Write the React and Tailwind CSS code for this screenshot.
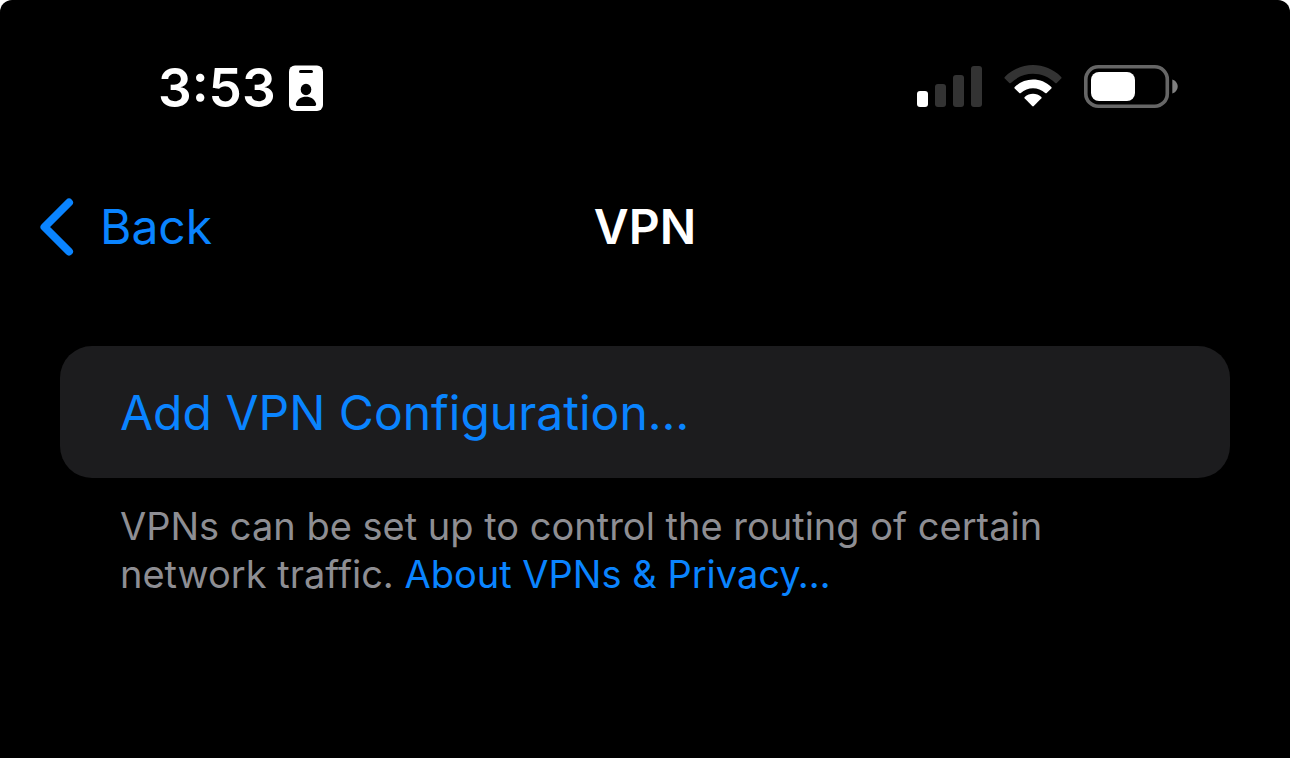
function BadgeIcon() {
  return (
    <svg width="34" height="46" viewBox="0 0 34 46" aria-hidden="true">
      <rect y="0.500" width="34" height="45.500" rx="6" fill="#fff" />
      <rect x="10" y="5" width="14" height="3" rx="1.500" fill="#000" />
      <ellipse cx="17" cy="24.500" rx="5.300" ry="5.800" fill="#000" />
      <path d="M9 41C7 41 6.600 39.800 7 38.400C8.300 34.400 12 31.800 17 31.800S25.700 34.400 27 38.400C27.400 39.800 27 41 25 41Z" fill="#000" />
    </svg>
  );
}

function SignalIcon() {
  return (
    <svg width="65" height="42" viewBox="0 0 65 42" role="img" aria-label="Signal: one bar">
      <rect x="0" y="26" width="11" height="16" rx="3" fill="#fff" />
      <rect x="18" y="19" width="11" height="23" rx="3" fill="#333" />
      <rect x="36" y="10" width="11" height="32" rx="3" fill="#333" />
      <rect x="54" y="1" width="11" height="41" rx="3" fill="#333" />
    </svg>
  );
}

function WifiIcon() {
  return (
    <svg width="58" height="42" viewBox="0 0 58 42" role="img" aria-label="Wi-Fi">
      <path d="M.8 13.500Q0 12.700 .8 11.900C16.400-3.900 41.600-3.900 57.200 11.900Q58 12.700 57.200 13.500L52.700 18Q52 18.700 51.200 18C38.700 5.700 19.300 5.700 6.800 18Q6 18.700 5.300 18Z" fill="#333" />
      <path d="M10.700 23.500Q10 22.700 10.700 21.900C20.800 12 37.200 12 47.300 21.900Q48 22.700 47.300 23.500L42.700 28Q42 28.700 41.200 28C34.300 21.500 23.700 21.500 16.800 28Q16 28.700 15.300 28Z" fill="#fff" />
      <path d="M20.600 33.300Q20 32.500 20.700 31.900C25.500 27.800 32.500 27.800 37.300 31.900Q38 32.500 37.400 33.300L29.800 41Q29 41.800 28.200 41Z" fill="#fff" />
    </svg>
  );
}

function BatteryIcon() {
  return (
    <svg width="94" height="44" viewBox="0 0 94 44" role="img" aria-label="Battery half full">
      <rect x="1.800" y="2.800" width="81.500" height="39.400" rx="12.500" fill="none" stroke="#666" strokeWidth="3.600" />
      <rect x="7" y="8" width="44" height="29" rx="8" fill="#fff" />
      <path d="M88.300 15.500C91.500 16.500 93.700 19.300 93.700 22.500S91.500 28.500 88.300 29.500Z" fill="#808080" />
    </svg>
  );
}

function BackIcon() {
  return (
    <svg width="34" height="58" viewBox="0 0 34 58" aria-hidden="true">
      <path d="M29 4.500L4.500 29L29 53.500" fill="none" stroke="#0a84ff" strokeWidth="8" strokeLinecap="round" strokeLinejoin="round" />
    </svg>
  );
}

export default function App() {
  return (
    <div className="min-h-screen bg-white font-['Inter','Liberation_Sans',sans-serif]">
      <div className="min-h-screen rounded-t-xl bg-black">
        <header>
          <div className="flex items-start justify-between pt-14 pr-28 pl-[158px]">
            <div className="flex h-16 items-center gap-[13px] text-white">
              <time className="text-[53px] leading-16 font-semibold">3:53</time>
              <BadgeIcon />
            </div>
            <div className="flex h-[60px] items-center gap-[22px]">
              <SignalIcon />
              <WifiIcon />
              <BatteryIcon />
            </div>
          </div>
          <nav className="grid grid-cols-[1fr_auto_1fr] items-center px-10 pt-[75px]">
            <button type="button" className="flex items-center gap-[26px] justify-self-start text-[48px] leading-16 text-[#0a84ff]">
              <BackIcon />
              Back
            </button>
            <h1 className="text-[48px] leading-16 font-semibold text-white">VPN</h1>
          </nav>
        </header>
        <main className="px-[60px] pt-[87px]">
          <button type="button" className="block w-full rounded-[32px] bg-[#1c1c1e] px-[60px] pt-[35px] pb-[33px] text-left text-[48px] leading-16 text-[#0a84ff]">
            Add VPN Configuration…
          </button>
          <p className="max-w-[1080px] px-[60px] pt-[24px] text-[38px] leading-12 text-[#8e8e93]">
            VPNs can be set up to control the routing of certain network traffic.{" "}
            <a href="#privacy" className="text-[#0a84ff]">About VPNs &amp; Privacy…</a>
          </p>
        </main>
      </div>
    </div>
  );
}
